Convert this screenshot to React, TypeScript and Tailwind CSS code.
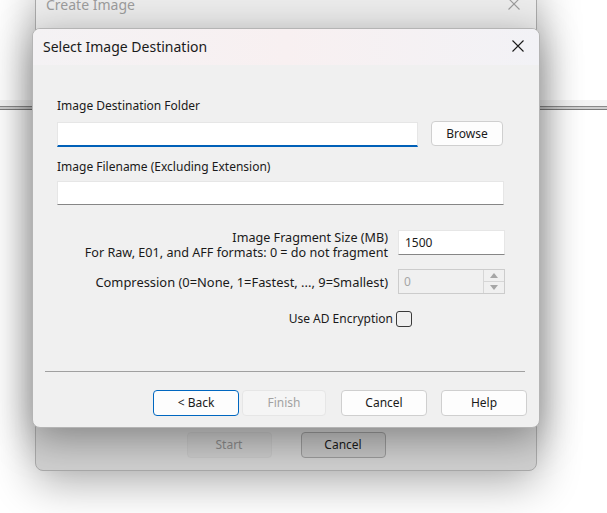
const ui = { fontFamily: '"Noto Sans", "Liberation Sans", sans-serif' };

function CloseGlyph({ color = "#1b1b1b", size = 12 }: { color?: string; size?: number }) {
  return (
    <svg width={size} height={size} viewBox="0 0 12 12" fill="none">
      <path d="M0.5 0.5 L11.5 11.5 M11.5 0.5 L0.5 11.5" stroke={color} strokeWidth="1.1" />
    </svg>
  );
}

type BtnProps = { label: string; variant?: "normal" | "focus" | "disabled"; className?: string };

function Button({ label, variant = "normal", className = "w-[86px] h-[26px]" }: BtnProps) {
  const look =
    variant === "focus"
      ? "border-[#0067c0] bg-[#fdfdfd] text-[#1a1a1a]"
      : variant === "disabled"
        ? "border-[#e6e6e6] bg-[#f5f5f5] text-[#a2a2a2]"
        : "border-[#cfcfcf] bg-[#fdfdfd] text-[#1a1a1a]";
  return (
    <div className={`flex items-center justify-center rounded-[4px] border text-[12px] ${look} ${className}`}>
      {label}
    </div>
  );
}

export default function App() {
  return (
    <div className="relative w-[607px] h-[513px] overflow-hidden bg-white" style={ui}>
      {/* desktop behind: separator band */}
      <div className="absolute left-0 right-0 top-[100px] h-[6px] bg-[#f4f4f4]" />
      <div className="absolute left-0 right-0 top-[106px] h-[4px] border-t border-b border-t-[#8a8a8a] border-b-[#7c7c7c] bg-[#cfcfcf]" />

      {/* parent window: Create Image */}
      <div className="absolute left-[35px] top-[-22px] w-[502px] h-[493px] flex flex-col rounded-[8px] border border-[#a9a9a9] bg-[#d0d0d0] shadow-[0_12px_44px_rgba(0,0,0,0.32)] overflow-hidden">
        <div className="h-[50px] flex items-center justify-between pl-[10px] pr-[16px] bg-[#ececec]">
          <span className="text-[14px] text-[#9c9c9c]">Create Image</span>
          <CloseGlyph color="#9c9c9c" />
        </div>
        <div className="flex-1" />
        <div className="flex justify-center gap-[29px] pb-[12px]">
          <div className="h-[26px] w-[85px] flex items-center justify-center rounded-[4px] border border-[#c6c6c6] bg-[#cbcbcb] text-[12px] text-[#8a8a8a]">
            Start
          </div>
          <div className="h-[26px] w-[85px] flex items-center justify-center rounded-[4px] border border-[#9a9a9a] bg-[#c4c4c4] text-[12px] text-[#1a1a1a]">
            Cancel
          </div>
        </div>
      </div>

      {/* modal dialog */}
      <div className="absolute left-[32px] top-[28px] w-[508px] h-[400px] flex flex-col rounded-[8px] border border-[#b4b4b4] bg-[#f0f0f0] shadow-[0_10px_40px_rgba(0,0,0,0.38)] overflow-hidden">
        <div className="h-[36px] flex items-center justify-between pl-[10px] pr-[15px] pb-[2px] bg-gradient-to-r from-[#f4f2f4] via-[#f8f0f1] to-[#f2f2f6]">
          <span className="text-[14px] text-[#1a1a1a]">Select Image Destination</span>
          <CloseGlyph />
        </div>

        <div className="flex flex-col pl-[24px] text-[12px] text-[#1a1a1a]">
          <div className="mt-[33px] leading-[16px]">Image Destination Folder</div>
          <div className="mt-[7px] flex items-start gap-[13px]">
            <div className="mt-[1px] w-[361px] h-[25px] bg-white border border-[#e6e6e6] border-b-2 border-b-[#0060b8]" />
            <Button label="Browse" className="w-[72px] h-[25px]" />
          </div>

          <div className="mt-[12px] leading-[16px]">Image Filename (Excluding Extension)</div>
          <div className="mt-[6px] w-[447px] h-[24px] bg-white border border-[#e6e6e6] border-b-[#868686]" />

          <div className="mt-[25px] w-[448px] grid grid-cols-[1fr_107px] gap-x-[10px] gap-y-[9px]">
            <div className="text-right text-[12.6px] leading-[15px]">
              <div>Image Fragment Size (MB)</div>
              <div>For Raw, E01, and AFF formats: 0 = do not fragment</div>
            </div>
            <div className="h-[25px] bg-white border border-[#e6e6e6] border-b-[#868686] flex items-center pl-[6px]">
              1500
            </div>

            <div className="text-right self-center text-[12.9px] leading-[16px]">Compression (0=None, 1=Fastest, ..., 9=Smallest)</div>
            <div className="h-[25px] flex border border-[#cccccc] bg-[#f0f0f0]">
              <div className="flex-1 pl-[5px] flex items-center text-[#a6a6a6]">0</div>
              <div className="w-[21px] flex flex-col border-l border-[#d6d6d6]">
                <div className="flex-1 flex items-center justify-center border-b border-[#d6d6d6]">
                  <svg width="8" height="5" viewBox="0 0 8 5"><path d="M0 5 L4 0 L8 5 Z" fill="#a6a6a6" /></svg>
                </div>
                <div className="flex-1 flex items-center justify-center">
                  <svg width="8" height="5" viewBox="0 0 8 5"><path d="M0 0 L8 0 L4 5 Z" fill="#a6a6a6" /></svg>
                </div>
              </div>
            </div>
          </div>

          <div className="mt-[17px] w-[355px] flex justify-end items-center gap-[3px]">
            <span className="leading-[16px]">Use AD Encryption</span>
            <div className="w-[16px] h-[16px] rounded-[3px] border border-[#3a3a3a]" />
          </div>
        </div>

        <div className="mt-[44px] ml-[12px] mr-[14px] h-px bg-[#a0a0a0]" />

        <div className="mt-[18px] flex justify-end pr-[12px]">
          <Button label="< Back" variant="focus" />
          <Button label="Finish" variant="disabled" className="ml-[3px] w-[84px] h-[26px]" />
          <Button label="Cancel" className="ml-[15px] w-[86px] h-[26px]" />
          <Button label="Help" className="ml-[14px] w-[86px] h-[26px]" />
        </div>
      </div>
    </div>
  );
}
